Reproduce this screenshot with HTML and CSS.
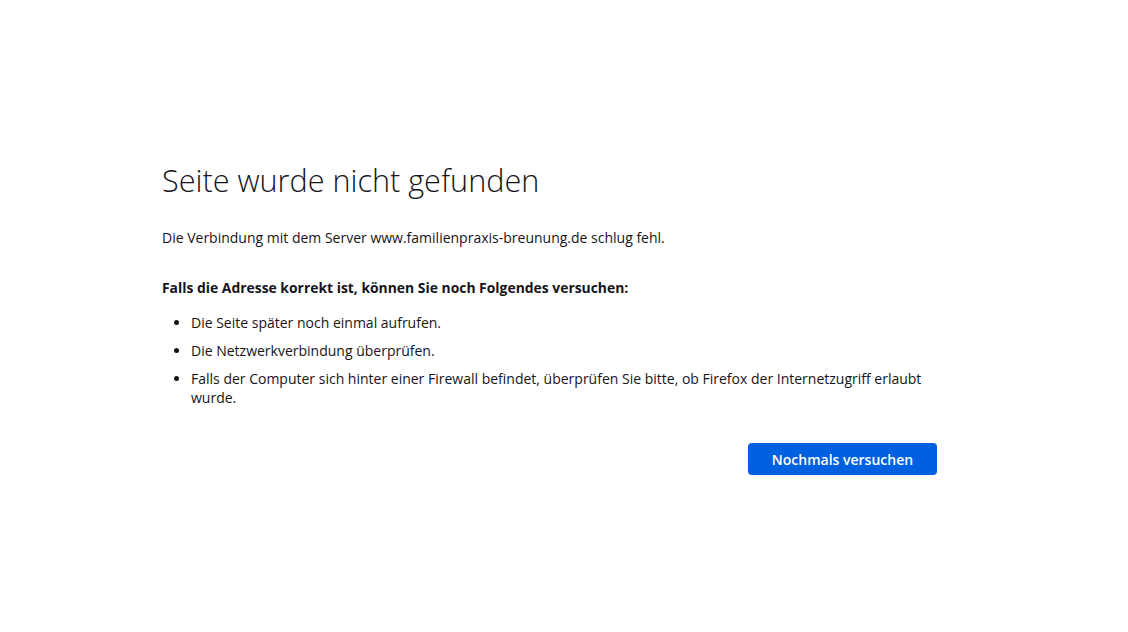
FILE: index.html
```html
<!DOCTYPE html>
<html lang="de">
<head>
<meta charset="utf-8">
<title>Seite wurde nicht gefunden</title>
<link rel="stylesheet" href="styles.css">
</head>
<body>
<main class="container">
  <h1 class="title">Seite wurde nicht gefunden</h1>
  <p class="desc">Die Verbindung mit dem Server www.familienpraxis-breunung.de schlug fehl.</p>
  <p class="hint">Falls die Adresse korrekt ist, können Sie noch Folgendes versuchen:</p>
  <ul class="list">
    <li>Die Seite später noch einmal aufrufen.</li>
    <li>Die Netzwerkverbindung überprüfen.</li>
    <li>Falls der Computer sich hinter einer Firewall befindet, überprüfen Sie bitte, ob Firefox der Internetzugriff erlaubt wurde.</li>
  </ul>
  <div class="actions">
    <button class="retry">Nochmals versuchen</button>
  </div>
</main>
</body>
</html>
```
FILE: styles.css
```css
html, body {
  margin: 0;
  padding: 0;
  background: #ffffff;
}
body {
  font-family: "Open Sans", "Noto Sans", sans-serif;
  color: #15141a;
  font-size: 14px;
}
.container {
  width: 775px;
  margin-left: 162px;
  padding-top: 160px;
}
.title {
  font-family: "Open Sans", sans-serif;
  font-weight: 300;
  font-size: 30.6px;
  line-height: 40px;
  margin: 0 0 28px;
  color: #15141a;
}
.desc {
  margin: 0 0 30px;
  line-height: 20px;
}
.hint {
  font-weight: 700;
  font-size: 13.9px;
  margin: 0 0 15px;
  line-height: 20px;
}
.list {
  margin: 0;
  padding-left: 29px;
}
.list li {
  line-height: 19px;
  margin-bottom: 9px;
}
.actions {
  display: flex;
  justify-content: flex-end;
  margin-top: 36px;
}
.retry {
  font-family: "Open Sans", sans-serif;
  font-weight: 600;
  font-size: 14px;
  color: #ffffff;
  background: #0061e0;
  border: none;
  border-radius: 4px;
  width: 189px;
  height: 32px;
  padding: 0;
}
```
